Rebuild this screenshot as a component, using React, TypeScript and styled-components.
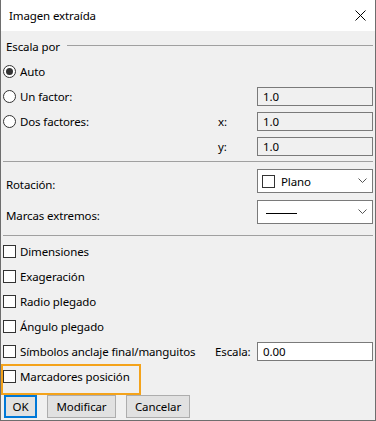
import React from "react";
import styled, { createGlobalStyle } from "styled-components";

const GlobalStyle = createGlobalStyle`
  html, body {
    margin: 0;
    padding: 0;
    background: #ffffff;
  }
  * {
    box-sizing: border-box;
  }
`;

const Window = styled.div`
  width: 376px;
  height: 421px;
  border: 1px solid #6e6e6e;
  border-top: none;
  background: #f0f0f0;
  font-family: "Noto Sans", "Segoe UI", sans-serif;
  font-size: 11.5px;
  letter-spacing: -0.12px;
  color: #000;
  display: flex;
  flex-direction: column;
  overflow: hidden;
`;

const TitleBar = styled.div`
  height: 31px;
  background: #fff;
  display: flex;
  align-items: center;
  justify-content: space-between;
  padding: 0 9px 1px 8px;
  flex-shrink: 0;
`;

const Title = styled.span`
  font-size: 11.5px;
`;

const Body = styled.div`
  padding: 3px 2px 0 2px;
  display: flex;
  flex-direction: column;
`;

const GroupHeader = styled.div`
  height: 25px;
  display: flex;
  align-items: center;
  padding-left: 3px;

  &::after {
    content: "";
    flex: 1;
    height: 1px;
    background: #a0a0a0;
    margin: -2px 0 0 7px;
  }
`;

const FormRow = styled.div`
  height: 25px;
  display: grid;
  grid-template-columns: 1fr 42px 116px;
  align-items: center;
`;

const Choice = styled.label`
  display: flex;
  align-items: center;
  gap: 4px;
  white-space: nowrap;
`;

const Radio = styled.span<{ $checked?: boolean }>`
  width: 13px;
  height: 13px;
  border-radius: 50%;
  border: 1px solid #333;
  background: #fff;
  display: flex;
  align-items: center;
  justify-content: center;

  &::before {
    content: "";
    width: 7px;
    height: 7px;
    border-radius: 50%;
    background: #333;
    display: ${(p) => (p.$checked ? "block" : "none")};
  }
`;

const Box = styled.span`
  width: 13px;
  height: 13px;
  border: 1px solid #333;
  background: #fff;
  flex-shrink: 0;
`;

const SideLabel = styled.span<{ $indent?: number }>`
  padding-left: ${(p) => p.$indent ?? 0}px;
`;

const TextField = styled.div<{ $disabled?: boolean }>`
  height: 19px;
  border: 1px solid #7a7a7a;
  background: ${(p) => (p.$disabled ? "#f0f0f0" : "#fff")};
  display: flex;
  align-items: center;
  padding-left: 5px;
`;

const Separator = styled.div<{ $top: number; $bottom: number }>`
  height: 1px;
  background: #a0a0a0;
  margin: ${(p) => p.$top}px 0 ${(p) => p.$bottom}px;
`;

const SelectRow = styled.div`
  height: 24px;
  display: flex;
  align-items: center;
  justify-content: space-between;
  padding-left: 3px;

  & + & {
    margin-top: 7px;
  }
`;

const SelectLabel = styled.span`
  padding-top: 6px;
`;

const Select = styled.div<{ $pad: number }>`
  width: 116px;
  height: 24px;
  border: 1px solid #7a7a7a;
  background: #fff;
  display: flex;
  align-items: center;
  padding: 0 5px 0 ${(p) => p.$pad}px;
`;

const SelectValue = styled.div`
  flex: 1;
  display: flex;
  align-items: center;
  gap: 6px;
`;

const LineSample = styled.span`
  width: 31px;
  height: 1px;
  background: #000;
  margin-top: 2px;
`;

const CheckRow = styled.div<{ $highlight?: boolean }>`
  height: 25px;
  display: grid;
  grid-template-columns: 1fr 42px 116px;
  align-items: center;
  position: relative;

  &::after {
    content: "";
    display: ${(p) => (p.$highlight ? "block" : "none")};
    position: absolute;
    left: -2px;
    top: 0;
    width: 136px;
    height: 27px;
    border: 2px solid #f4a31b;
    pointer-events: none;
  }
`;

const ButtonBar = styled.div`
  display: flex;
  gap: 10px;
  margin-top: 6px;
  padding-left: 1px;
`;

const Button = styled.button<{ $w: number; $default?: boolean }>`
  width: ${(p) => p.$w}px;
  height: 23px;
  padding: 0;
  font: inherit;
  letter-spacing: inherit;
  color: #000;
  background: #e1e1e1;
  border: ${(p) => (p.$default ? "2px solid #0078d7" : "1px solid #adadad")};
`;

const Chevron = () => (
  <svg width="9" height="6" viewBox="0 0 9 6">
    <polyline points="0.5,0.5 4.5,4.5 8.5,0.5" fill="none" stroke="#555" strokeWidth="1" />
  </svg>
);

const CloseIcon = () => (
  <svg width="11" height="11" viewBox="0 0 11 11">
    <path d="M0.5 0.5 L10.5 10.5 M10.5 0.5 L0.5 10.5" stroke="#000" strokeWidth="1" />
  </svg>
);

const checks = ["Dimensiones", "Exageración", "Radio plegado", "Ángulo plegado"];

export default function App() {
  return (
    <>
      <GlobalStyle />
      <Window>
        <TitleBar>
          <Title>Imagen extraída</Title>
          <CloseIcon />
        </TitleBar>
        <Body>
          <GroupHeader>Escala por</GroupHeader>
          <FormRow>
            <Choice>
              <Radio $checked />
              Auto
            </Choice>
          </FormRow>
          <FormRow>
            <Choice>
              <Radio />
              Un factor:
            </Choice>
            <span />
            <TextField $disabled>1.0</TextField>
          </FormRow>
          <FormRow>
            <Choice>
              <Radio />
              Dos factores:
            </Choice>
            <SideLabel $indent={3}>x:</SideLabel>
            <TextField $disabled>1.0</TextField>
          </FormRow>
          <FormRow>
            <span />
            <SideLabel $indent={3}>y:</SideLabel>
            <TextField $disabled>1.0</TextField>
          </FormRow>

          <Separator $top={2} $bottom={7} />

          <SelectRow>
            <SelectLabel>Rotación:</SelectLabel>
            <Select $pad={4}>
              <SelectValue>
                <Box />
                Plano
              </SelectValue>
              <Chevron />
            </Select>
          </SelectRow>
          <SelectRow>
            <SelectLabel>Marcas extremos:</SelectLabel>
            <Select $pad={8}>
              <SelectValue>
                <LineSample />
              </SelectValue>
              <Chevron />
            </Select>
          </SelectRow>

          <Separator $top={11} $bottom={3} />

          {checks.map((c) => (
            <CheckRow key={c}>
              <Choice>
                <Box />
                {c}
              </Choice>
            </CheckRow>
          ))}
          <CheckRow>
            <Choice>
              <Box />
              Símbolos anclaje final/manguitos
            </Choice>
            <SideLabel>Escala:</SideLabel>
            <TextField>0.00</TextField>
          </CheckRow>
          <CheckRow $highlight>
            <Choice>
              <Box />
              Marcadores posición
            </Choice>
          </CheckRow>

          <ButtonBar>
            <Button $w={33} $default>
              OK
            </Button>
            <Button $w={69}>Modificar</Button>
            <Button $w={64}>Cancelar</Button>
          </ButtonBar>
        </Body>
      </Window>
    </>
  );
}
